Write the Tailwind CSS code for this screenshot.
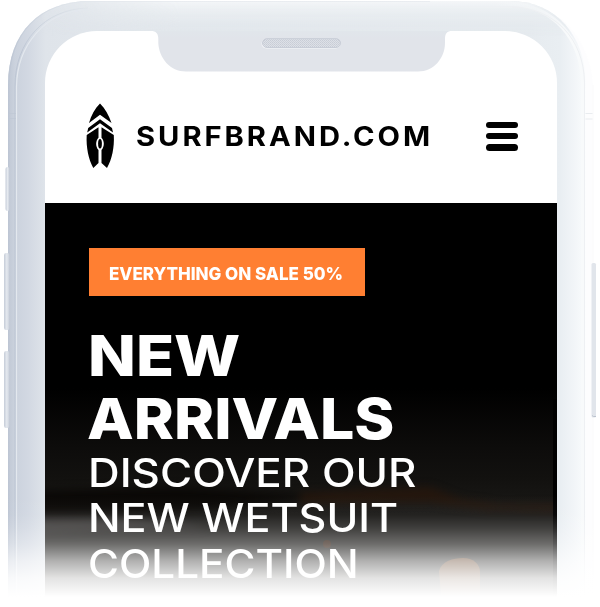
<!DOCTYPE html>
<html lang="en">
<head>
<meta charset="utf-8">
<title>Surfbrand</title>
<script src="https://cdn.jsdelivr.net/npm/@tailwindcss/browser@4"></script>
</head>
<body class="bg-white">
<div class="relative w-[600px] h-[607px] overflow-hidden bg-white font-['Inter',sans-serif]">
  <!-- phone body -->
  <svg class="absolute inset-0" width="600" height="607" viewBox="0 0 600 607" fill="none">
    <defs>
      <linearGradient id="body" gradientUnits="userSpaceOnUse" x1="8" y1="0" x2="586" y2="0">
        <stop offset="0" stop-color="#c0c8d5"/><stop offset=".012" stop-color="#cbd2dd"/><stop offset=".035" stop-color="#d2d8e2"/><stop offset=".065" stop-color="#dfe4ea"/><stop offset=".2" stop-color="#e2e7ec"/><stop offset=".9" stop-color="#e6ebef"/><stop offset=".955" stop-color="#e9eef2"/><stop offset=".98" stop-color="#f2f5f8"/><stop offset="1" stop-color="#fafcfd"/>
      </linearGradient>
      <linearGradient id="top" x1="0" y1="0" x2="0" y2="1">
        <stop offset="0" stop-color="#f4f6f8"/><stop offset=".3" stop-color="#ebeff2" stop-opacity=".9"/><stop offset="1" stop-color="#e0e6eb" stop-opacity="0"/>
      </linearGradient>
      <linearGradient id="fadeIn" x1="0" y1="0" x2="1" y2="0">
        <stop offset=".06" stop-color="#fff" stop-opacity="0"/><stop offset=".3" stop-color="#fff"/>
      </linearGradient>
      <linearGradient id="edge" gradientUnits="userSpaceOnUse" x1="8" y1="90" x2="90" y2="0">
        <stop offset=".3" stop-color="#bcc5d3"/><stop offset="1" stop-color="#e4e9ee"/>
      </linearGradient>
      <linearGradient id="rim" gradientUnits="userSpaceOnUse" x1="480" y1="0" x2="584" y2="80">
        <stop offset=".1" stop-color="#f8fafb" stop-opacity="0"/><stop offset=".7" stop-color="#f8fafb"/>
      </linearGradient>
      <mask id="m"><rect width="600" height="40" fill="url(#fadeIn)"/></mask>
      <linearGradient id="key" x1="0" y1="0" x2="1" y2="0">
        <stop offset="0" stop-color="#c5ccd8"/><stop offset=".5" stop-color="#e5e9ef"/><stop offset="1" stop-color="#c8cfda"/>
      </linearGradient>
      <pattern id="mesh" width="2" height="2" patternUnits="userSpaceOnUse"><rect width="2" height="2" fill="#dde0e7"/><rect width="1" height="1" fill="#c8cdd6"/><rect x="1" y="1" width="1" height="1" fill="#cdd2da"/></pattern>
      <clipPath id="clip"><path d="M8 607V85C8 32 40 1 90 1H510C556 1 585.500 36 585.500 82V607Z"/></clipPath>
    </defs>
    <path d="M586 90V607H593V88C593 62 580 34 560 18" fill="#fdfdfe"/>
    <path d="M585 113.500H593M585 119H593" stroke="#e9ecef"/>
    <path d="M593 85V607" stroke="#fafafb"/>
    <path d="M8 607V85C8 32 40 1 90 1H510C556 1 585.500 36 585.500 82V607Z" fill="url(#body)"/>
    <g clip-path="url(#clip)">
      <rect width="600" height="36" fill="url(#top)" mask="url(#m)"/>
      <path d="M480 4H510C554 6 582 38 583 84V607" stroke="url(#rim)" stroke-width="4"/>
      <path d="M80 1H430" stroke="#dfe4e9"/>
      <path d="M8.500 607V85C8.500 32 40 1 90 1" stroke="url(#edge)" stroke-width="2" opacity=".7"/>
    </g>
    <path d="M512 7C554 8 583.500 38 584.500 82V607" stroke="#eef0f3"/>
    <path d="M15 607V86C15 42 44 9 88 8" stroke="url(#edge)" stroke-width="1"/>
    <path d="M16.500 607V87C17 45 45 11 88 9.500" stroke="#e3e8ee" stroke-width="1.200"/>
    <path d="M9 113.500H16M9 118.500H16" stroke="#bfc7d4" stroke-width=".7"/>
    <rect x="5.500" y="167" width="4" height="44" rx="2" fill="url(#key)"/>
    <rect x="4" y="253" width="5.500" height="77" rx="2.200" fill="url(#key)"/>
    <rect x="4" y="351" width="5.500" height="77" rx="2.200" fill="url(#key)"/>
    <rect x="591.500" y="263" width="4.500" height="154.500" rx="1.500" fill="#e1e5eb"/>
    <path d="M592 415.500Q593 417 596 416.500" stroke="#bcc3ce"/>
  </svg>

  <!-- screen -->
  <main class="relative ml-[45px] mt-[31px] w-[512px] h-[576px] rounded-t-[52px] overflow-hidden bg-white flex flex-col">
    <header class="h-[172.400px] shrink-0 pt-[38px] pl-[41px] pr-[39px] flex items-center">
      <svg class="shrink-0" width="29" height="66" viewBox="86 102.500 29 66" fill="#000">
        <path d="M100 103C105 108 109 115 111.500 122.500L100 114.200L89 122.500C91 115 95 108 100 103Z"/>
        <path d="M100 118.800L112 127.500L113 132L100 122.800L87.200 132L88.200 127.500Z"/>
        <path d="M98.500 126.800V137.200C95.400 140.500 95.400 146 98.500 149.500V162.500L93.300 167.500C88.500 159 86 147 86.700 134.600Z"/>
        <path d="M101.500 126.800V137.200C104.600 140.500 104.600 146 101.500 149.500V162.500L107 167.500C112 159 114.500 147 113.800 134.600Z"/>
        <ellipse cx="100" cy="143.200" rx="1.900" ry="4.700"/>
      </svg>
      <span class="ml-[20.500px] mt-px w-[297px] shrink-0 whitespace-nowrap text-[27px] leading-8 font-bold tracking-[2.750px] origin-left scale-x-[1.08] text-black">SURFBRAND.COM</span>
      <div class="ml-auto w-8 flex flex-col gap-[4.800px]">
        <span class="h-[6.500px] rounded-full bg-black"></span>
        <span class="h-[6.500px] rounded-full bg-black"></span>
        <span class="h-[6.500px] rounded-full bg-black"></span>
      </div>
    </header>
    <section class="relative grow bg-[linear-gradient(to_bottom,#000_0,#000_185px,#0d0c0b_245px,#12110f_275px,#1b1a18_310px,#1b1a18_100%)] pt-[45px] pl-11 text-white">
      <svg class="absolute left-0 top-[196px]" width="512" height="208" viewBox="45 400 512 208">
        <defs>
          <filter id="soft" x="-20%" y="-60%" width="140%" height="220%" color-interpolation-filters="sRGB"><feGaussianBlur stdDeviation="4"/></filter>
        </defs>
        <g filter="url(#soft)">
          <path d="M20 492L180 488L330 498L200 512L20 514Z" fill="#0a0806"/>
          <path d="M300 494L430 488L460 500L500 506L580 505V512L490 511L430 503L300 504Z" fill="#2a170b" opacity=".75"/>
          <path d="M20 519L130 519L210 528L20 534Z" fill="#3a3837"/>
        </g>
        <path d="M439 572C442 562 453 559 463 559S480 565 480 573V607H442Z" fill="#b9672b" opacity=".4"/>
        <circle cx="327" cy="545" r="4" fill="#3b1a0a" opacity=".6"/>
        <path d="M553 400H557V607H553Z" fill="#000"/>
      </svg>
      <div class="relative flex flex-col items-start">
        <div class="w-[275.500px] h-[47.600px] bg-[#ff7f32] pl-[19.500px] pt-[2px] flex items-center">
          <span class="whitespace-nowrap text-[18px] font-extrabold origin-left scale-x-[.945]">EVERYTHING ON SALE 50%</span>
        </div>
        <h1 class="mt-[28px] flex flex-col items-start text-[56.500px] leading-[63px] font-extrabold whitespace-nowrap">
          <span class="-ml-px origin-left scale-x-[1.107]">NEW</span>
          <span class="-ml-[2.500px] origin-left scale-x-[1.075]">ARRIVALS</span>
        </h1>
        <p class="-ml-px flex flex-col items-start text-[40px] leading-[45.300px] font-medium whitespace-nowrap">
          <span class="origin-left scale-x-[1.097]">DISCOVER OUR</span>
          <span class="origin-left scale-x-[1.077]">NEW WETSUIT</span>
          <span class="origin-left scale-x-[1.055]">COLLECTION</span>
        </p>
      </div>
    </section>
  </main>

  <!-- notch -->
  <svg class="absolute left-[150px] top-[28px]" width="302" height="45" viewBox="150 28 302 45">
    <defs><linearGradient id="ng" x1="0" y1="0" x2="0" y2="1"><stop offset="0" stop-color="#e1e6eb"/><stop offset=".2" stop-color="#e1e4ea"/></linearGradient></defs>
    <path d="M151 31C156 31 158.300 33.500 158.300 39V43C159 58 170 71.500 186 71.500H418C434 71.500 445 58 445 43V39C445 33.500 447 31 452 31Z" fill="url(#ng)"/>
    <rect x="261.500" y="39" width="79" height="9.500" rx="4.700" fill="#f5f7f9"/>
    <rect x="262.500" y="38.700" width="78" height="8.800" rx="4.400" fill="url(#mesh)" stroke="#c8cdd7"/>
  </svg>

  <!-- bottom fade -->
  <div class="absolute inset-x-0 bottom-0 h-[112px] bg-[linear-gradient(to_bottom,rgb(255_255_255/0)_0,rgb(255_255_255/.04)_20px,rgb(255_255_255/.16)_33px,rgb(255_255_255/.36)_49px,rgb(255_255_255/.66)_66px,rgb(255_255_255/.88)_83px,#fff_102px)]"></div>
</div>
</body>
</html>
